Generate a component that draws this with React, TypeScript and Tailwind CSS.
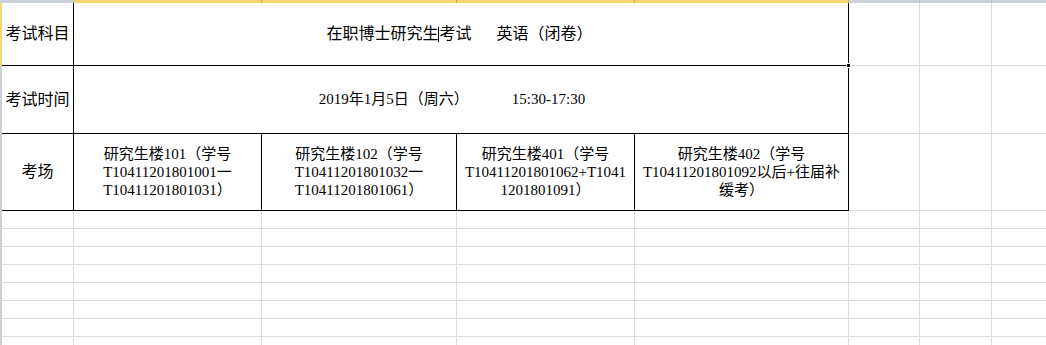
import React from 'react';

// column widths incl. 1px right border
const extraCols = [71, 72, 72];
const blankRows = Array.from({ length: 8 });

const GrayCell: React.FC<{ w: string; h: string }> = ({ w, h }) => (
  <div className={`${w} ${h} shrink-0 border-r border-b border-[#dadcdd]`} />
);

const GrayTail: React.FC<{ h: string }> = ({ h }) => (
  <>
    <GrayCell w="w-[71px]" h={h} />
    <GrayCell w="w-[72px]" h={h} />
    <GrayCell w="w-[72px]" h={h} />
  </>
);

export default function App() {
  return (
    <div className="w-[1046px] h-[345px] overflow-hidden bg-white text-black font-['Liberation_Serif','Noto_Sans_CJK_SC',serif] text-[15px]">
      {/* column header edge */}
      <div className="flex h-[3px]">
        <div className="w-[74px] shrink-0 bg-[#ccd1d9] border-r border-[#b7bcc4]" />
        <div className="w-[188px] shrink-0 bg-[#f7d46e] border-r border-[#dcae3e]" />
        <div className="w-[195px] shrink-0 bg-[#f7d46e] border-r border-[#dcae3e]" />
        <div className="w-[178px] shrink-0 bg-[#f7d46e] border-r border-[#dcae3e]" />
        <div className="w-[214px] shrink-0 bg-[#f7d46e] border-r border-[#dcae3e]" />
        {extraCols.map((w, i) => (
          <div
            key={i}
            className={`${w === 71 ? 'w-[71px]' : 'w-[72px]'} shrink-0 bg-[#ccd1d9] border-r border-[#b7bcc4]`}
          />
        ))}
        <div className="flex-1 bg-[#ccd1d9]" />
      </div>

      <div className="flex">
        {/* row header edge */}
        <div className="w-[2px] shrink-0 flex flex-col">
          <div className="h-[63px] bg-[#f7d46e]" />
          <div className="h-[300px] bg-[#ccd1d9]" />
        </div>

        <div className="flex flex-col">
          {/* 考试科目 */}
          <div className="flex text-[16px]">
            <div className="w-[72px] h-[63px] shrink-0 border-r border-b border-black flex items-center justify-center whitespace-nowrap">
              考试科目
            </div>
            <div className="relative w-[775px] h-[63px] shrink-0 border-r border-b border-black flex items-center justify-center whitespace-nowrap pr-[3px]">
              <span>在职博士研究生</span>
              <span className="inline-block w-px h-[15px] bg-black" />
              <span>考试</span>
              <span className="ml-[25px]">英语（闭卷）</span>
              <div className="absolute right-[-3px] bottom-[-3px] w-[5px] h-[5px] bg-black border border-white" />
            </div>
            <GrayTail h="h-[63px]" />
          </div>

          {/* 考试时间 */}
          <div className="flex">
            <div className="w-[72px] h-[68px] shrink-0 border-r border-b border-black flex items-center justify-center whitespace-nowrap text-[16px]">
              考试时间
            </div>
            <div className="w-[775px] h-[68px] shrink-0 border-r border-b border-black flex items-center justify-center whitespace-nowrap pr-[18px]">
              <span>2019年1月5日（周六）</span>
              <span className="ml-[43px]">15:30-17:30</span>
            </div>
            <GrayTail h="h-[68px]" />
          </div>

          {/* 考场 */}
          <div className="flex">
            <div className="w-[72px] h-[77px] shrink-0 border-r border-b border-black flex items-center justify-center text-[16px]">
              考场
            </div>
            <div className="w-[188px] h-[77px] shrink-0 border-r border-b border-black flex flex-col items-center justify-center leading-[18px] whitespace-nowrap">
              <span>研究生楼101（学号</span>
              <span>T10411201801001一</span>
              <span>T10411201801031）</span>
            </div>
            <div className="w-[195px] h-[77px] shrink-0 border-r border-b border-black flex flex-col items-center justify-center leading-[18px] whitespace-nowrap">
              <span>研究生楼102（学号</span>
              <span>T10411201801032一</span>
              <span>T10411201801061）</span>
            </div>
            <div className="w-[178px] h-[77px] shrink-0 border-r border-b border-black flex flex-col items-center justify-center leading-[18px] whitespace-nowrap">
              <span>研究生楼401（学号</span>
              <span>T10411201801062+T1041</span>
              <span>1201801091）</span>
            </div>
            <div className="w-[214px] h-[77px] shrink-0 border-r border-b border-black flex flex-col items-center justify-center leading-[18px] whitespace-nowrap">
              <span>研究生楼402（学号</span>
              <span>T10411201801092以后+往届补</span>
              <span>缓考）</span>
            </div>
            <GrayTail h="h-[77px]" />
          </div>

          {/* empty rows */}
          {blankRows.map((_, i) => (
            <div key={i} className="flex">
              <GrayCell w="w-[72px]" h="h-[18px]" />
              <GrayCell w="w-[188px]" h="h-[18px]" />
              <GrayCell w="w-[195px]" h="h-[18px]" />
              <GrayCell w="w-[178px]" h="h-[18px]" />
              <GrayCell w="w-[214px]" h="h-[18px]" />
              <GrayTail h="h-[18px]" />
            </div>
          ))}
        </div>
      </div>
    </div>
  );
}
